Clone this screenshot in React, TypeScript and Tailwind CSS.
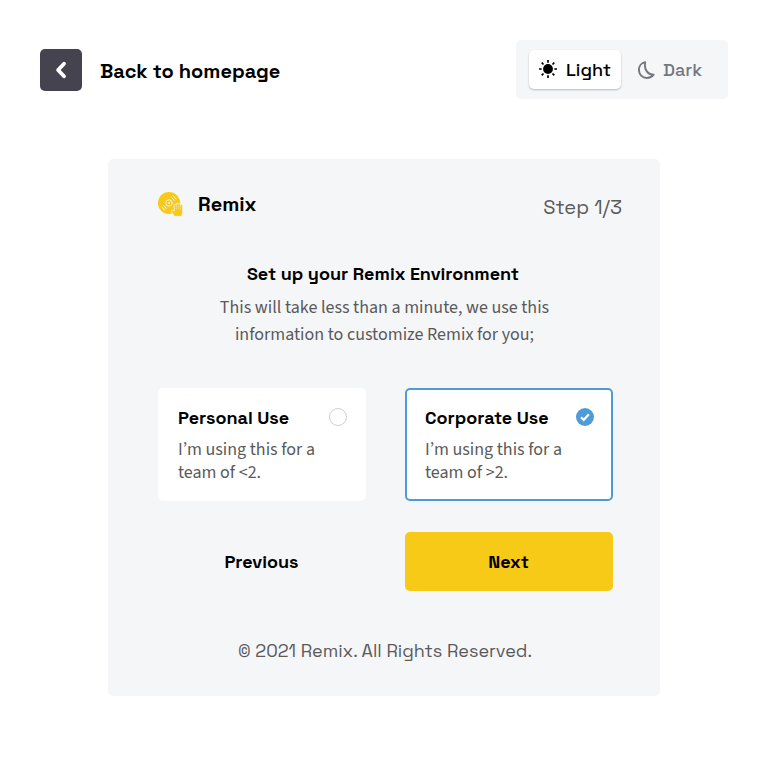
import React from "react";

const display = "font-['Space_Grotesk','Inter',sans-serif]";
const body = "font-['Source_Sans_3','Noto_Sans_CJK_SC',sans-serif]";

function SunIcon() {
  return (
    <svg width="18" height="18" viewBox="0 0 18 18" fill="none" stroke="#000" strokeWidth="1.7" className="-mt-[2px]">
      <circle cx="9" cy="9" r="4.9" fill="#000" stroke="none" />
      <path d="M9 0v2.7M9 15.3V18M0 9h2.7M15.3 9H18M2.7 2.7l1.8 1.8M13.5 13.5l1.8 1.8M2.7 15.3l1.8-1.8M13.5 4.5l1.8-1.8" />
    </svg>
  );
}

function MoonIcon() {
  return (
    <svg width="17" height="18" viewBox="0 0 17 18" fill="none" stroke="#73777f" strokeWidth="1.9" strokeLinejoin="round">
      <path d="M7.2 1.1C3.5 1.8.9 5 .9 8.800c0 4.600 3.500 8.200 8 8.200 2.700 0 5.100-1.300 6.700-3.400C9.600 13.800 5.800 8.300 7.200 1.100Z" />
    </svg>
  );
}

function RemixLogo() {
  return (
    <svg width="26" height="26" viewBox="0 0 26 26" fill="none">
      <circle cx="11" cy="12" r="11.100" fill="#f7ca18" />
      <g stroke="#f5f6f8" strokeLinecap="round">
        <circle cx="11" cy="12" r="3.200" strokeWidth=".9" />
        <circle cx="11" cy="12" r=".9" fill="#f5f6f8" stroke="none" />
        <path d="M13.700 6.800c1.100.6 1.900 1.400 2.500 2.500M15.100 5c1.200.7 2.200 1.700 2.900 2.900M8.300 17.200c-1.100-.6-1.900-1.400-2.500-2.500M6.900 19c-1.200-.7-2.200-1.700-2.900-2.900" strokeWidth="1" />
      </g>
      <path
        d="M16.300 25.300c-.5-1.400-1.500-2.900-2.700-4.200-1.200-1.300.6-2.600 1.800-1.500l.8.700v-5.900c0-1.500 2-1.500 2.100-.3v-.9c0-1.400 2.100-1.400 2.100 0v.2c0-1.200 2.100-1.200 2.100.2v.7c0-1 2.200-1 2.200.4v5.600c0 2-.4 3.300-1 5Z"
        fill="#f7ca18"
        stroke="#f5f6f8"
        strokeWidth=".8"
      />
      <path d="M18.400 14.200v4M20.400 13.800v4.400M22.400 14.600v3.600" stroke="#f5f6f8" strokeWidth=".4" />
    </svg>
  );
}

function Option({ title, text, selected }: { title: string; text: string; selected?: boolean }) {
  return (
    <div
      className={`h-[113px] w-[208px] rounded-[5px] border-2 bg-white pt-[18px] pr-[17px] pl-[18px] ${selected ? "border-[#4f9bd9]" : "border-white"}`}
    >
      <div className="flex h-[20px] items-start justify-between">
        <span className={`${display} text-[18px] leading-[20px] font-semibold whitespace-nowrap text-black`}>{title}</span>
        {selected ? (
          <svg width="18" height="18" viewBox="0 0 18 18" className="shrink-0">
            <circle cx="9" cy="9" r="9" fill="#4f9bd9" />
            <path d="M5 9.300l2.700 2.600 5.200-5.600" fill="none" stroke="#fff" strokeWidth="2.200" />
          </svg>
        ) : (
          <span className="size-[18px] shrink-0 rounded-full border border-[#d0d0d0] bg-white" />
        )}
      </div>
      <p className={`${body} mt-[10px] text-[18px] leading-[23px] whitespace-pre-line text-[#5a5a5a]`}>{text}</p>
    </div>
  );
}

export default function App() {
  return (
    <main className="h-[760px] w-[768px] bg-white px-10 pt-10">
      <header className="flex h-[59px] items-center justify-between">
        <div className="flex items-center gap-[18px]">
          <button className="flex size-[42px] items-center justify-center rounded-[5px] bg-[#44434f]">
            <svg width="12" height="18" viewBox="0 0 12 18" fill="none" stroke="#fff" strokeWidth="3.800" strokeLinecap="round" strokeLinejoin="round">
              <path d="M9 2.700 3.100 9 9 15.300" />
            </svg>
          </button>
          <span className={`${display} mt-[2px] text-[20px] font-semibold whitespace-nowrap text-black`}>Back to homepage</span>
        </div>
        <div className="flex h-[59px] w-[212px] items-center rounded-[5px] bg-[#f5f6f8] pl-[13px]">
          <button className="flex h-[39px] w-[92px] items-center gap-[9px] rounded-[5px] bg-white pl-[10px] shadow-[0_1px_2px_rgba(0,0,0,0.25)]">
            <SunIcon />
            <span className={`${display} text-[18px] font-medium text-black`}>Light</span>
          </button>
          <button className="ml-[17px] flex items-center gap-[8px]">
            <MoonIcon />
            <span className={`${display} text-[18px] font-medium text-[#73777f]`}>Dark</span>
          </button>
        </div>
      </header>

      <section className="mx-auto mt-[60px] h-[537px] w-[552px] rounded-[5px] bg-[#f5f6f8] pt-[32px] pr-[38px] pl-[50px]">
        <div className="flex h-[30px] items-start justify-between">
          <div className="flex items-start gap-[14px]">
            <RemixLogo />
            <span className={`${display} text-[20px] leading-[26px] font-semibold text-black`}>Remix</span>
          </div>
          <span className={`${display} mt-[3px] text-[20px] leading-[26px] text-[#5a5a5a]`}>Step 1/3</span>
        </div>

        <div className="mt-[40px] w-[455px] text-center">
          <h1 className={`${display} -ml-[5px] text-[18px] leading-[26px] font-semibold whitespace-nowrap text-black`}>Set up your Remix Environment</h1>
          <p className={`${body} mt-[7px] -ml-[2px] text-[18px] leading-[27px] whitespace-pre-line text-[#5a5a5a]`}>
            {"This will take less than a minute, we use this\ninformation to customize Remix for you;"}
          </p>
        </div>

        <div className="mt-[40px] flex gap-[39px]">
          <Option title="Personal Use" text={"I’m using this for a\nteam of <2."} />
          <Option title="Corporate Use" text={"I’m using this for a\nteam of >2."} selected />
        </div>

        <div className="mt-[31px] flex gap-[39px]">
          <button className={`${display} h-[59px] w-[208px] pr-[1px] text-[18px] leading-[26px] font-semibold text-black`}>Previous</button>
          <button className={`${display} h-[59px] w-[208px] rounded-[5px] bg-[#f7ca18] pr-[1px] text-[18px] leading-[26px] font-semibold text-black`}>Next</button>
        </div>

        <p className={`${display} mt-[47px] w-[454px] text-center text-[18px] leading-[26px] text-[#5a5a5a]`}>© 2021 Remix. All Rights Reserved.</p>
      </section>
    </main>
  );
}
